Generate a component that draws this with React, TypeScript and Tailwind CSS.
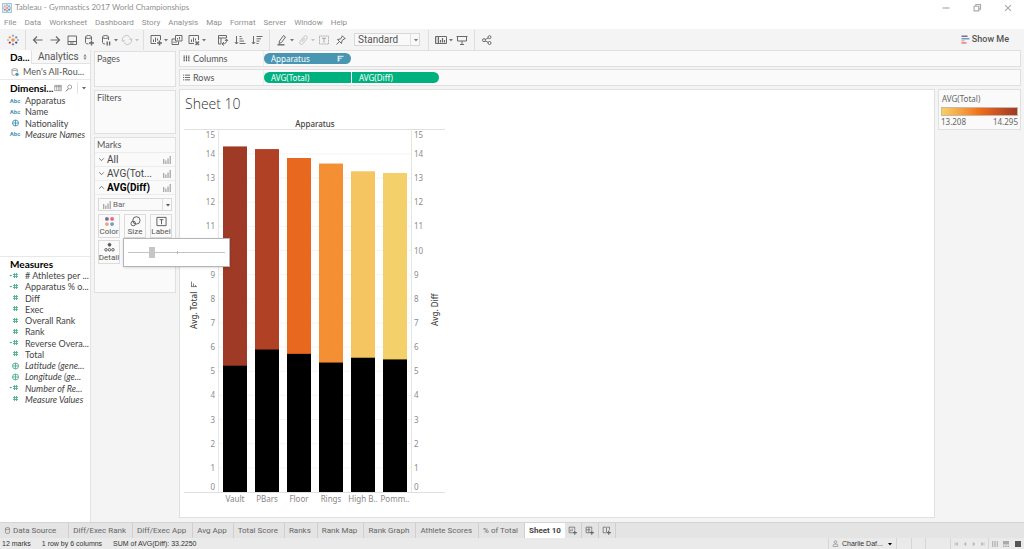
import type { ReactNode } from 'react'
import { useState } from 'react'

interface Bar {
  label: string
  total: number
  diff: number
  color: string
}

interface Field {
  name: string
  kind: 'abc' | 'geo' | 'num' | 'calc'
  italic?: boolean
}

const BARS: Bar[] = [
  { label: 'Vault', total: 14.31, diff: 5.23, color: '#9e3a26' },
  { label: 'PBars', total: 14.2, diff: 5.9, color: '#b04124' },
  { label: 'Floor', total: 13.83, diff: 5.72, color: '#e8681f' },
  { label: 'Rings', total: 13.6, diff: 5.36, color: '#f58f33' },
  { label: 'High B..', total: 13.28, diff: 5.56, color: '#f5c562' },
  { label: 'Pomm..', total: 13.21, diff: 5.49, color: '#f3d06a' },
]

const DIMENSIONS: Field[] = [
  { name: 'Apparatus', kind: 'abc' },
  { name: 'Name', kind: 'abc' },
  { name: 'Nationality', kind: 'geo' },
  { name: 'Measure Names', kind: 'abc', italic: true },
]

const MEASURES: Field[] = [
  { name: '# Athletes per ...', kind: 'calc' },
  { name: 'Apparatus % o...', kind: 'calc' },
  { name: 'Diff', kind: 'num' },
  { name: 'Exec', kind: 'num' },
  { name: 'Overall Rank', kind: 'num' },
  { name: 'Rank', kind: 'num' },
  { name: 'Reverse Overa...', kind: 'calc' },
  { name: 'Total', kind: 'num' },
  { name: 'Latitude (gene...', kind: 'geo', italic: true },
  { name: 'Longitude (ge...', kind: 'geo', italic: true },
  { name: 'Number of Re...', kind: 'calc', italic: true },
  { name: 'Measure Values', kind: 'num', italic: true },
]

const MENU = ['File', 'Data', 'Worksheet', 'Dashboard', 'Story', 'Analysis', 'Map', 'Format', 'Server', 'Window', 'Help']

const TABS = [
  'Diff/Exec Rank',
  'Diff/Exec App',
  'Avg App',
  'Total Score',
  'Ranks',
  'Rank Map',
  'Rank Graph',
  'Athlete Scores',
  '% of Total',
]

function Icon({ children, className = 'size-3' }: { children: ReactNode; className?: string }) {
  return (
    <svg viewBox="0 0 12 12" className={`shrink-0 ${className}`} fill="none" stroke="currentColor" strokeWidth="1" aria-hidden="true">
      {children}
    </svg>
  )
}

function Caret({ className = '' }: { className?: string }) {
  return (
    <svg viewBox="0 0 4 4" className={`size-1 shrink-0 ${className}`} fill="currentColor" aria-hidden="true">
      <path d="M0 1h4L2 3.4z" />
    </svg>
  )
}

function ToolButton({ label, faded, children }: { label: string; faded?: boolean; children: ReactNode }) {
  return (
    <button aria-label={label} className={`flex h-4 w-[17px] items-center justify-center ${faded ? 'text-[#c4c4c4]' : 'text-[#6a6a6a]'}`}>
      <Icon>{children}</Icon>
    </button>
  )
}

function Separator() {
  return <div className="ml-1 mr-[3px] h-5 w-px bg-[#dedede]" />
}

function TableauMark({ className = 'size-3' }: { className?: string }) {
  return (
    <Icon className={className}>
      <path d="M6 4v4M4 6h4" stroke="#e8762c" />
      <path d="M6 .5v2.4M4.8 1.7h2.4" stroke="#7199a6" strokeWidth=".8" />
      <path d="M6 9.1v2.4M4.8 10.3h2.4" stroke="#5b6591" strokeWidth=".8" />
      <path d="M2.8 2.2v2.4M1.6 3.4H4" stroke="#eb912c" strokeWidth=".9" />
      <path d="M9.2 2.2v2.4M8 3.4h2.4" stroke="#59879b" strokeWidth=".9" />
      <path d="M2.8 7.4v2.4M1.6 8.6H4" stroke="#c72035" strokeWidth=".9" />
      <path d="M9.2 7.4v2.4M8 8.6h2.4" stroke="#1f457e" strokeWidth=".9" />
      <path d="M1 5.2v1.6M.2 6h1.6" stroke="#7199a6" strokeWidth=".6" />
      <path d="M11 5.2v1.6M10.2 6h1.6" stroke="#5b6591" strokeWidth=".6" />
    </Icon>
  )
}

function BarsIcon({ className = 'size-2' }: { className?: string }) {
  return (
    <svg viewBox="0 0 8 8" className={`shrink-0 ${className}`} fill="#a8a8a8" aria-hidden="true">
      <path d="M0 3h1.300v5H0zM2.200 4.500h1.300V8H2.200zM4.400 2.500h1.300V8H4.400zM6.600 0h1.300v8H6.600z" />
    </svg>
  )
}

function SortIcon({ className = 'size-2' }: { className?: string }) {
  return (
    <svg viewBox="0 0 8 8" className={`shrink-0 ${className}`} stroke="currentColor" strokeWidth="1" aria-hidden="true">
      <path d="M1 1.500h6.500M1 3.700h4.400M1 5.900h2.400M1.400 1v6.500" />
    </svg>
  )
}

function FieldIcon({ kind }: { kind: Field['kind'] }) {
  if (kind === 'abc') {
    return <span className="w-3 text-center text-[6px] leading-[8px] font-bold text-[#4996b2]">Abc</span>
  }
  return (
    <svg viewBox="0 0 12 8" className="h-2 w-3 shrink-0" fill="none" stroke="currentColor" strokeWidth=".9" aria-hidden="true">
      {kind === 'geo' ? (
        <path d="M6.500 1a3 3 0 1 0 0 6 3 3 0 1 0 0-6M6.500 1v6M3.500 4h6" />
      ) : (
        <path d="M5.500 1v5M7.500 1v5M4 2.500h5M4 4.500h5" />
      )}
      {kind === 'calc' && <path d="M.8 3.500h2" strokeWidth="1.200" />}
    </svg>
  )
}

function FieldList({ fields, className }: { fields: Field[]; className: string }) {
  return (
    <ul className={`grid auto-rows-fr ${className}`}>
      {fields.map(field => (
        <li key={field.name} className="flex items-center gap-1 pl-[9px] whitespace-nowrap">
          <FieldIcon kind={field.kind} />
          <span className={`font-['Lato',sans-serif] text-[9px] leading-[11px] text-[#444] ${field.italic ? 'italic' : ''}`}>{field.name}</span>
        </li>
      ))}
    </ul>
  )
}

function TitleBar() {
  return (
    <header className="bg-white text-[#8f8f8f]">
      <div className="flex h-[15px] items-center">
        <div className="ml-0.5 flex size-[10px] items-center justify-center border border-[#a9c7dc] bg-[#dcebf5]">
          <TableauMark className="size-2" />
        </div>
        <h1 className="ml-[3px] font-['Lato',sans-serif] text-[8px] leading-[15px]">Tableau - Gymnastics 2017 World Championships</h1>
        <div className="ml-auto flex items-center gap-[17px] pr-[9px] text-[#aaa]">
          <button aria-label="Minimize"><Icon className="size-[14px]"><path d="M3 6h6" /></Icon></button>
          <button aria-label="Restore"><Icon className="size-[14px]"><path d="M3.500 4.500h4v4h-4zM5 4.500V3h4v4H7.500" /></Icon></button>
          <button aria-label="Close"><Icon className="size-[14px]"><path d="m3.500 3.500 5 5m0-5-5 5" /></Icon></button>
        </div>
      </div>
      <nav className="flex h-[14px] items-center gap-2 pt-px pl-1 text-[8px]">
        {MENU.map(item => (
          <button key={item}>{item}</button>
        ))}
      </nav>
    </header>
  )
}

function Toolbar() {
  return (
    <div className="flex h-[21px] items-center bg-[#f4f4f4] pl-1 text-[#777]">
      <button aria-label="Start page" className="flex w-[17px] justify-center"><TableauMark /></button>
      <Separator />
      <ToolButton label="Undo"><path d="M10.500 6h-9M5 2.500 1.500 6 5 9.500" strokeWidth="1.200" /></ToolButton>
      <ToolButton label="Redo"><path d="M1.500 6h9M7 2.500 10.500 6 7 9.500" strokeWidth="1.200" /></ToolButton>
      <ToolButton label="Save"><path d="M2 2h8.500v8.500H2zM2 7.500h8.500M4 9h3.500" /></ToolButton>
      <ToolButton label="New data source"><path d="M2.500 3v5.500q0 1.500 3 1.500M8.500 3v3M2.500 3q0-1.500 3-1.500t3 1.500-3 1.500-3-1.500" /><path d="M8.500 6.500v5M6 9h5" strokeWidth="1.500" /></ToolButton>
      <ToolButton label="Pause auto updates"><path d="M2.500 3v5.500q0 1.500 2.500 1.500M8.500 3v3M2.500 3q0-1.500 3-1.500t3 1.500-3 1.500-3-1.500" /><path d="M7.200 7.500v4M9.600 7.500v4" strokeWidth="1.400" /></ToolButton>
      <Caret />
      <ToolButton label="Run update" faded><path d="M2 7.500A4 4 0 0 1 9 3.500M10 4.500A4 4 0 0 1 3 8.500M.8 6 2 7.600 3.800 6.400M11.200 6 10 4.400 8.200 5.600" /></ToolButton>
      <Caret className="text-[#c4c4c4]" />
      <Separator />
      <ToolButton label="New worksheet"><path d="M6 9.500H1v-8h9.500V6M3.500 8V5.500M5.500 8V3.500M7.500 6.500v-2" /><path d="M9.500 6.500v5M7 9h5" strokeWidth="1.500" /></ToolButton>
      <Caret />
      <ToolButton label="Duplicate"><path d="M4.500 1.500h6.500v5.500H4.500zM4 5H1v5.500h6.500V7.500M6.500 5.500V4M8.500 5.500V3M3 9V7.500M5 9V7.500" /></ToolButton>
      <ToolButton label="Clear sheet"><path d="M6 9.500H1v-8h9.500V6M3.500 8V5.500M5.500 8V3.500M7.500 6.500v-2" /><path d="m7.500 7.500 3.500 3.500m0-3.500L7.500 11" strokeWidth="1.500" /></ToolButton>
      <Caret />
      <div className="w-2" />
      <ToolButton label="Swap rows and columns"><path d="M1.500 1.500h8v2.500h-8zM1.500 4v6H4V4M9.500 5.500q1 4-4 4.500M7 8l-2 2 2 1.500M8 7l1.500-2L11 7" /></ToolButton>
      <ToolButton label="Sort ascending"><path d="M2.500 2v8M.8 8l1.700 2 1.700-2M5.500 2.500h2M5.500 4.800h3M5.500 7.100h4.500M5.500 9.500h6" /></ToolButton>
      <ToolButton label="Sort descending"><path d="M2.500 2v8M.8 8l1.700 2 1.700-2M5.500 2.500h6M5.500 4.800h4.500M5.500 7.100h3M5.500 9.500h2" /></ToolButton>
      <Separator />
      <ToolButton label="Highlight"><path d="m3.500 7 4-5.500 2 1.500-4 5.500-2.500 1z" /><path d="M1.500 10.800h7" strokeWidth="1.400" /></ToolButton>
      <Caret />
      <ToolButton label="Group members" faded><path d="M4 6.500 7 2.500q1.500-1.500 3 0 .8 1-.2 2.300l-4 5q-1.500 1.200-2.600.2-1-1-.2-2.500L6.500 3.500M5 8l3-4" /></ToolButton>
      <Caret className="text-[#c4c4c4]" />
      <button aria-label="Show mark labels" className="flex h-4 w-[17px] items-center justify-center text-[#a5a5a5]">
        <Icon><path d="M1.500 2h9v8h-9z" strokeDasharray="1 .6" /><path d="M4 4.300h4M6 4.300V8.500" /></Icon>
      </button>
      <ToolButton label="Fix axes"><path d="m7 1.500 3.500 3.500M7.500 2 5.500 5l-3 .5 4 4 .5-3 3-2M4.500 7.500 1.500 10.500" /></ToolButton>
      <div className="relative ml-[5px]">
        <select aria-label="Fit" className="block h-[13px] w-[66px] appearance-none border border-[#d8d8d8] bg-[#f9f9f9] pl-[3px] text-[10px] leading-[11px] text-[#555]">
          <option>Standard</option>
        </select>
        <span className="pointer-events-none absolute inset-y-0 right-0 flex w-[10px] items-center justify-center border-l border-[#dedede]"><Caret /></span>
      </div>
      <div className="w-1" />
      <Separator />
      <ToolButton label="Show or hide cards"><path d="M.5 2.500h11v7H.5zM3.500 2.500v7M1.500 4h1M1.500 6h1M1.500 8h1" /><path d="M5.500 8.500V6M7.500 8.500V4M9.500 8.500V6" strokeWidth="1.200" /></ToolButton>
      <Caret />
      <ToolButton label="Presentation mode"><path d="M.5 2.500h11M1.500 2.500v4.500h9V2.500M6 7v3M4 10.500h4" /></ToolButton>
      <Separator />
      <ToolButton label="Share"><circle cx="3" cy="6.200" r="1.500" /><circle cx="8.500" cy="3.200" r="1.500" /><circle cx="8.500" cy="9" r="1.500" /><path d="m4.300 5.500 2.900-1.600M4.300 7l2.900 1.400" /></ToolButton>
      <button className="mr-[15px] ml-auto flex items-center gap-0.5 text-[9px] leading-[11px] font-medium text-[#555]">
        <svg viewBox="0 0 9 9" className="size-[9px]" aria-hidden="true">
          <path d="M.5.500h6v1.500h-6z" fill="#7b6a94" />
          <path d="M.5 3h8v1.500h-8z" fill="#6b9fd0" />
          <path d="M.5 5.200h3v1.300h-3z" fill="#f7a08a" />
          <path d="M.5 7.200h5v1.500h-5z" fill="#f1777b" />
        </svg>
        Show Me
      </button>
    </div>
  )
}

function DataPane() {
  return (
    <aside className="flex w-[91px] shrink-0 flex-col border-r border-[#e2e2e2] bg-white">
      <div className="flex h-[14px] items-stretch">
        <button className="w-[31px] pl-[10px] text-left font-['Lato',sans-serif] text-[10px] leading-[14px] font-bold text-black">Da...</button>
        <button className="flex flex-1 items-center justify-between border-b border-l border-[#e2e2e2] bg-[#f7f7f7] pr-[3px] pl-1.5 text-[10px] text-[#555]">
          Analytics
          <svg viewBox="0 0 4 6" className="h-1.5 w-1" fill="#888" aria-hidden="true"><path d="M2 0l1.600 2.400H.4zM2 6l1.600-2.400H.4z" /></svg>
        </button>
      </div>
      <div className="flex h-4 items-center gap-1 border-b border-[#e8e8e8] pl-[11px] font-['Lato',sans-serif] text-[9px] text-[#555]">
        <Icon className="size-2 text-[#777]">
          <path d="M1.500 2.500v7q0 1.500 4 1.500M9.500 2.500v4M1.500 2.500q0-1.500 4-1.500t4 1.500-4 1.500-4-1.500" />
          <circle cx="9" cy="9.500" r="2.500" fill="#4996b2" stroke="none" />
        </Icon>
        Men&apos;s All-Rou...
      </div>
      <div className="flex h-[15px] items-center pl-[10px]">
        <h2 className="font-['Lato',sans-serif] text-[10px] leading-[12px] font-bold text-black">Dimensi...</h2>
        <button aria-label="View data" className="ml-auto text-[#888]"><Icon className="size-2"><path d="M1 2h10v8H1zM1 4h10M4 2v8M7 2v8M9 2v8" /></Icon></button>
        <button aria-label="Find field" className="ml-[3px] text-[#777]"><Icon className="size-2"><circle cx="7" cy="4.500" r="3" /><path d="M5 7 1.500 11" strokeWidth="1.500" /></Icon></button>
        <div className="ml-1 h-3 w-px bg-[#e2e2e2]" />
        <button aria-label="Data pane menu" className="mr-1 ml-1 text-[#666]"><Caret /></button>
      </div>
      <FieldList fields={DIMENSIONS} className="h-[45px] text-[#4996b2]" />
      <div className="mt-[116px] flex h-[14px] items-center border-t border-[#e8e8e8] pl-[10px]">
        <h2 className="font-['Lato',sans-serif] text-[10px] leading-[12px] font-bold text-black">Measures</h2>
      </div>
      <FieldList fields={MEASURES} className="h-[135px] text-[#4cb08a]" />
    </aside>
  )
}

function MarkButton({ label, children }: { label: string; children: ReactNode }) {
  return (
    <button className="flex h-6 flex-col items-center justify-between border border-[#dcdcdc] bg-[#fafafa] pt-px text-[8px] leading-[10px] text-[#555]">
      <Icon className="size-[11px]">{children}</Icon>
      {label}
    </button>
  )
}

function SizeSlider() {
  const [size, setSize] = useState(23)
  return (
    <div className="absolute top-[100px] left-[28px] z-10 h-[29px] w-[107px] border border-[#b5b5b5] bg-white px-1 shadow-sm">
      <div className="relative flex h-full items-center">
        <div className="absolute inset-x-0 h-px bg-[#c4c4c4]" />
        <div className="absolute left-1/2 h-[3px] w-px bg-[#b5b5b5]" />
        <input
          type="range"
          aria-label="Size"
          value={size}
          onChange={e => setSize(Number(e.target.value))}
          className="relative h-3 w-full appearance-none bg-transparent [&::-webkit-slider-thumb]:h-[11px] [&::-webkit-slider-thumb]:w-1.5 [&::-webkit-slider-thumb]:appearance-none [&::-webkit-slider-thumb]:bg-[#c6c6c6]"
        />
      </div>
    </div>
  )
}

function Cards() {
  return (
    <div className="flex w-[88px] shrink-0 flex-col gap-[3px] pt-px pr-[3px] pl-[3px] text-[#555]">
      <section className="h-9 border border-[#e0e0e0] bg-[#fafafa] px-0.5 pt-px font-['Lato',sans-serif] text-[9px] leading-[11px]">Pages</section>
      <section className="h-11 border border-[#e0e0e0] bg-[#fafafa] px-0.5 pt-px font-['Lato',sans-serif] text-[9px] leading-[11px]">Filters</section>
      <section className="relative h-[156px] border border-[#e0e0e0] bg-[#fafafa]">
        <h2 className="h-[14px] px-0.5 pt-px font-['Lato',sans-serif] text-[9px] leading-[11px]">Marks</h2>
        {['All', 'AVG(Tot...', 'AVG(Diff)'].map((name, i) => (
          <button
            key={name}
            className={`flex h-[14px] w-full items-center border-t border-[#ececec] pr-1 pl-[3px] text-[10px] leading-[13px] ${i === 2 ? 'font-bold text-black' : 'text-[#444]'}`}
          >
            <Icon className="size-[7px] text-[#666]">
              <path d={i === 2 ? 'm2 8 4-4 4 4' : 'm2 4 4 4 4-4'} strokeWidth="1.500" />
            </Icon>
            <span className="ml-0.5">{name}</span>
            <BarsIcon className="ml-auto size-2" />
          </button>
        ))}
        <div className="border-t border-[#ececec] px-[3px] pt-[3px]">
          <div className="relative">
            <select aria-label="Mark type" className="block h-[13px] w-full appearance-none border border-[#d8d8d8] bg-[#fafafa] pl-[14px] text-[8px] leading-[11px] text-[#666]">
              <option>Bar</option>
            </select>
            <span className="pointer-events-none absolute inset-y-0 left-[5px] flex items-center"><BarsIcon /></span>
            <span className="pointer-events-none absolute inset-y-0 right-0 flex w-[10px] items-center justify-center border-l border-[#dedede]"><Caret /></span>
          </div>
          <div className="mt-[3px] grid grid-cols-3 gap-x-1 gap-y-0.5">
            <MarkButton label="Color">
              <g stroke="none">
                <circle cx="3.200" cy="3.200" r="2.100" fill="#7b6a94" />
                <circle cx="8.800" cy="3.200" r="2.100" fill="#ee6677" />
                <circle cx="3.200" cy="8.800" r="2.100" fill="#f5a07a" />
                <circle cx="8.800" cy="8.800" r="2.100" fill="#6b9fd0" />
              </g>
            </MarkButton>
            <MarkButton label="Size"><circle cx="7" cy="4.800" r="4" /><circle cx="3.600" cy="8.200" r="2.500" /></MarkButton>
            <MarkButton label="Label"><path d="M1 1.500h10v9H1zM4 4h4M6 4v5" /></MarkButton>
            <MarkButton label="Detail">
              <circle cx="6" cy="3" r="1.500" fill="currentColor" />
              <circle cx="2.200" cy="8.500" r="1.400" /><circle cx="6" cy="8.500" r="1.400" /><circle cx="9.800" cy="8.500" r="1.400" />
            </MarkButton>
          </div>
        </div>
        <SizeSlider />
      </section>
    </div>
  )
}

function Shelf({ name, icon, children }: { name: string; icon: ReactNode; children: ReactNode }) {
  return (
    <div className="flex h-[17px] items-center border border-[#e0e0e0] bg-[#fafafa]">
      <div className="flex h-full w-[84px] items-center gap-[3px] border-r border-[#ececec] pl-[3px] font-['Lato',sans-serif] text-[9px] text-[#555]">
        {icon}
        {name}
      </div>
      <div className="flex gap-px font-['Noto_Sans',sans-serif] text-[8px] text-white">{children}</div>
    </div>
  )
}

// plot geometry, in chart pixels
const LEFT = 35
const RIGHT = 227
const BASE = 374
const UNIT = 24.15
const STEP = 32

function tickY(tick: number) {
  if (tick === 15) return 17
  if (tick === 0) return 369
  return BASE - tick * UNIT
}

function BarChart() {
  const ticks = Array.from({ length: 16 }, (_, i) => i)
  return (
    <svg width="262" height="390" viewBox="0 0 262 390" className="block font-['Noto_Sans',sans-serif]" role="img" aria-label="Average total and difficulty by apparatus">
      <text x="131" y="9" textAnchor="middle" className="fill-[#444] text-[8px] font-medium">Apparatus</text>
      <path d="M0 11.500h261M0 374.500h261" stroke="#e0e0e0" />
      {ticks.slice(1, 15).map(t => (
        <path key={t} d={`M${LEFT} ${BASE - t * UNIT}H${RIGHT}`} stroke="#f4f4f4" />
      ))}
      <path d={`M${LEFT - 0.5} 12V374M${RIGHT + 0.5} 12V374`} stroke="#e6e6e6" />
      {BARS.map((bar, i) => {
        const x = LEFT + 4 + i * STEP
        return (
          <g key={bar.label}>
            <rect x={x} y={BASE - bar.total * UNIT} width="24" height={bar.total * UNIT} fill={bar.color} />
            <rect x={x} y={BASE - bar.diff * UNIT} width="24" height={bar.diff * UNIT} fill="#000" />
            <text x={x + 12} y="384" textAnchor="middle" className="fill-[#888] text-[8px]">{bar.label}</text>
          </g>
        )
      })}
      {ticks.map(t => (
        <g key={t} className="fill-[#8c8c8c] text-[8px]">
          <text x="31" y={tickY(t) + 3} textAnchor="end">{t}</text>
          <text x="230" y={tickY(t) + 3}>{t}</text>
        </g>
      ))}
      <g transform="translate(13 211) rotate(-90)">
        <text className="fill-[#444] text-[8px] font-medium">Avg. Total</text>
        <path d="M42-5.500h5.500M42-3.500h3.500M42-1.500h2M42.400-6V0" stroke="#666" strokeWidth=".8" />
      </g>
      <text transform="translate(254 208) rotate(-90)" className="fill-[#444] text-[8px] font-medium">Avg. Diff</text>
    </svg>
  )
}

function Worksheet() {
  return (
    <main className="flex min-w-0 flex-1 flex-col pr-[3px] pb-1">
      <Shelf name="Columns" icon={<Icon className="size-[7px]"><path d="M2 1v10M6 1v10M10 1v10" strokeWidth="2" strokeDasharray="2 .5" /></Icon>}>
        <button className="flex h-[11px] w-[87px] items-center justify-between rounded-full bg-[#4996b2] px-[7px]">
          Apparatus
          <SortIcon className="size-[7px]" />
        </button>
      </Shelf>
      <div className="h-0.5" />
      <Shelf name="Rows" icon={<Icon className="size-[7px]"><path d="M3.500 2H12M3.500 6H12M3.500 10H12M0 2h2M0 6h2M0 10h2" strokeWidth="1.500" /></Icon>}>
        <button className="flex h-[11px] w-[87px] items-center rounded-l-full bg-[#00b180] px-[7px]">AVG(Total)</button>
        <button className="flex h-[11px] w-[87px] items-center rounded-r-full bg-[#00b180] px-[7px]">AVG(Diff)</button>
      </Shelf>
      <div className="mt-[3px] flex flex-1 items-stretch gap-[3px]">
        <section className="flex-1 border border-[#e0e0e0] bg-white pl-1">
          <h2 className="h-7 pt-[5px] pl-px font-['Open_Sans',sans-serif] text-[14px] leading-[18px] font-light text-[#333]">Sheet 10</h2>
          <BarChart />
        </section>
        <aside className="w-[83px] shrink-0">
          <div className="border border-[#e0e0e0] bg-[#fafafa] px-0.5 pb-0.5 font-['Noto_Sans',sans-serif] text-[8px] text-[#666]">
            <h2 className="pl-px leading-[17px]">AVG(Total)</h2>
            <div className="h-[9px] border border-[#c9b9a0] bg-linear-to-r from-[#f4d166] via-[#f06f1a] to-[#9e3a26]" />
            <div className="flex justify-between leading-[11px]">
              <span>13.208</span>
              <span>14.295</span>
            </div>
          </div>
        </aside>
      </div>
    </main>
  )
}

function SheetTabs() {
  return (
    <nav className="flex h-4 items-stretch border-t border-[#d4d4d4] bg-[#e4e4e4] text-[8px] text-[#666]">
      <button className="flex items-center gap-0.5 border-r border-[#cfcfcf] pr-3 pl-1">
        <Icon className="size-[7px]"><path d="M2.500 2.500v7q0 1.500 3.500 1.500t3.500-1.500v-7M2.500 2.500q0-1.500 3.500-1.500t3.500 1.500-3.500 2-3.500-2" /></Icon>
        Data Source
      </button>
      {TABS.map(tab => (
        <button key={tab} className="border-r border-[#cfcfcf] pr-1.5 pl-1">{tab}</button>
      ))}
      <button className="bg-white px-1 font-bold text-[#444]">Sheet 10</button>
      {[
        { label: 'New worksheet', d: 'M6 9H1.500V1.500H9V5M3.500 7V5M5.500 7V3.500' },
        { label: 'New dashboard', d: 'M6 9H1.500V1.500H9V5M1.500 5H7M5.200 1.500V9' },
        { label: 'New story', d: 'M6 9H1.500V1.500H5.200L6 2.200 7 1.500H10V5M6 2.200V8' },
      ].map(item => (
        <button key={item.label} aria-label={item.label} className="flex w-[17px] items-center justify-center border-r border-[#cfcfcf]">
          <Icon className="size-[9px]">
            <path d={item.d} />
            <path d="M9 6v5.500M6.300 8.800h5.500" strokeWidth="1.500" />
          </Icon>
        </button>
      ))}
    </nav>
  )
}

function StatusBar() {
  return (
    <footer className="flex h-[11px] items-center bg-[#eaeaea] font-['Liberation_Sans',sans-serif] text-[7px] leading-[11px] text-[#333]">
      <div className="flex gap-[11px] pl-0.5 whitespace-nowrap">
        <span>12 marks</span>
        <span>1 row by 6 columns</span>
        <span>SUM of AVG(Diff): 33.2250</span>
      </div>
      <button className="ml-auto flex h-full w-[68px] items-center border-l border-[#d6d6d6] pr-1 pl-[3px]">
        <Icon className="size-[7px] text-[#777]"><circle cx="6" cy="3.500" r="2.300" /><path d="M2 11V9q0-2 4-2t4 2v2z" /></Icon>
        <span className="ml-[3px]">Charlie Daf...</span>
        <Caret className="ml-auto text-black" />
      </button>
      <div className="h-full w-[15px] border-l border-[#d6d6d6]" />
      <div className="h-full w-[14px] border-l border-[#d6d6d6]" />
      <div className="h-full w-[25px] border-l border-[#d6d6d6]" />
      <div className="flex h-full w-[38px] items-center justify-around border-l border-[#d6d6d6] text-[#b5b5b5]">
        {[
          { label: 'First sheet', d: 'M1 .5v5M5.500 .5v5L2 3z' },
          { label: 'Previous sheet', d: 'M4.500 .5v5L1.500 3z' },
          { label: 'Next sheet', d: 'M1.500 .5v5L4.500 3z' },
          { label: 'Last sheet', d: 'M5 .5v5M.5 .5v5L4 3z' },
        ].map(item => (
          <button key={item.label} aria-label={item.label}>
            <svg viewBox="0 0 6 6" className="size-1" fill="currentColor" stroke="currentColor" strokeWidth=".6"><path d={item.d} /></svg>
          </button>
        ))}
      </div>
      <div className="flex h-full w-9 items-center justify-around border-l border-[#d6d6d6]">
        <button aria-label="Sheet sorter"><svg viewBox="0 0 6 6" className="size-1.5" stroke="#aaa" strokeWidth="1.300"><path d="M0 1h6M0 3h6M0 5h6" strokeDasharray="1.400 .9" /></svg></button>
        <button aria-label="Filmstrip"><svg viewBox="0 0 6 6" className="size-1.5" fill="#aaa"><path d="M0 0h6v3.500H0zM0 4.500h1.500V6H0zM2.250 4.500h1.500V6h-1.500zM4.500 4.500H6V6H4.500z" /></svg></button>
        <button aria-label="Tabs" className="size-1.5 bg-[#555]" />
      </div>
    </footer>
  )
}

export default function App() {
  return (
    <div className="flex min-h-screen flex-col bg-[#f4f4f4] font-['Roboto',sans-serif]">
      <TitleBar />
      <Toolbar />
      <div className="flex flex-1">
        <DataPane />
        <Cards />
        <Worksheet />
      </div>
      <SheetTabs />
      <StatusBar />
    </div>
  )
}
